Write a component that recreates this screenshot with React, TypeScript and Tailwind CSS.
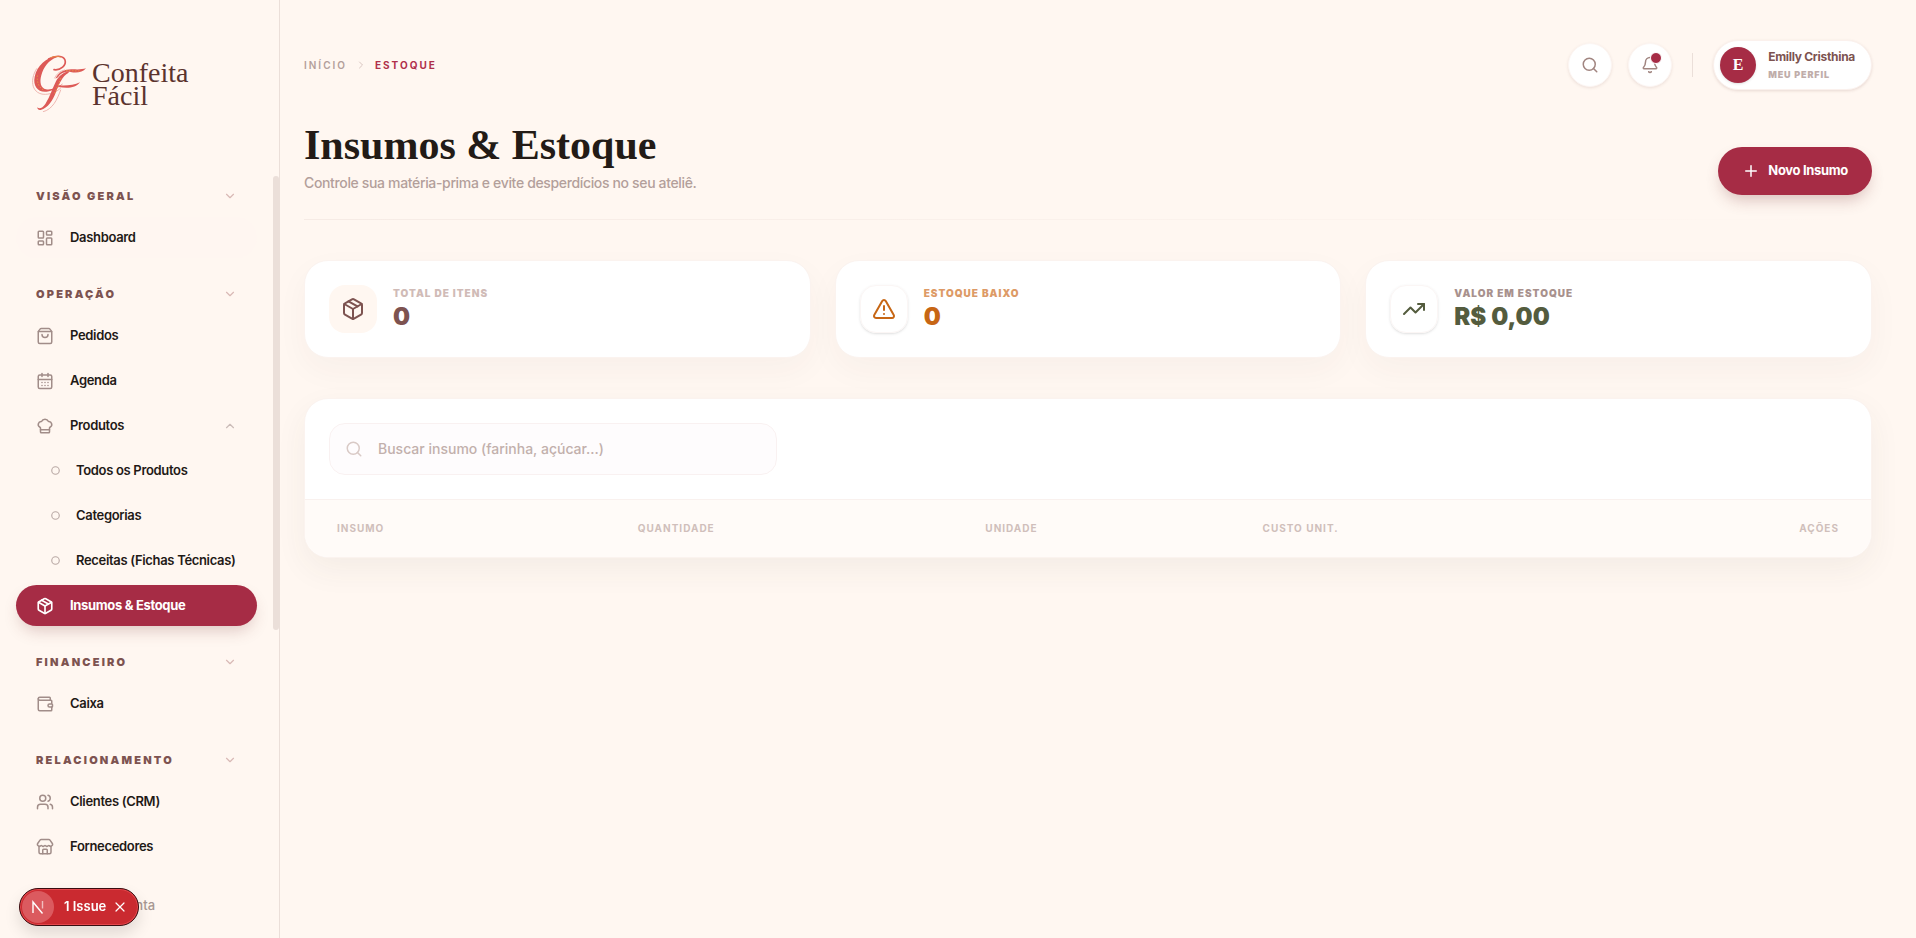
import type { ReactNode } from 'react';
import {
  Bell,
  CalendarDays,
  ChefHat,
  ChevronDown,
  ChevronRight,
  ChevronUp,
  Circle,
  LayoutDashboard,
  Package,
  Plus,
  Search,
  ShoppingBag,
  Store,
  TrendingUp,
  TriangleAlert,
  Users,
  Wallet,
  X,
} from 'lucide-react';
import type { LucideIcon } from 'lucide-react';

interface NavItemProps {
  icon: LucideIcon;
  label: string;
  active?: boolean;
  hovered?: boolean;
}

const NavItem = ({ icon: Icon, label, active, hovered }: NavItemProps) => {
  let style = 'text-[#1f1a17] font-semibold';
  if (active) style = 'bg-[#a62c45] text-white font-bold shadow-[0_8px_16px_-4px_rgba(120,50,50,0.25)]';
  if (hovered) style = 'text-[#1f1a17] font-semibold bg-[#fff6f1]';
  return (
    <li>
      <a href="#" className={`flex h-[41px] items-center gap-4 rounded-full px-5 text-[13px] tracking-tight ${style}`}>
        <Icon size={18} strokeWidth={active ? 2.2 : 2} className={active ? 'text-white' : 'text-[#a18d89]'} />
        {label}
      </a>
    </li>
  );
};

const SubItem = ({ label }: { label: string }) => (
  <li>
    <a href="#" className="flex h-[41px] items-center gap-4 pl-[35px] text-[13px] font-semibold tracking-tight whitespace-nowrap text-[#1f1a17]">
      <Circle size={9} strokeWidth={3} className="text-[#b9a9a5]" />
      {label}
    </a>
  </li>
);

const Section = ({ title, children }: { title: string; children: ReactNode }) => (
  <section>
    <button type="button" className="mb-[5px] flex h-8 w-full items-center justify-between px-5 text-[11px] font-black tracking-[0.2em] text-[#7d5350]">
      {title}
      <ChevronDown size={14} className="text-[#d9b9b5]" />
    </button>
    <ul className="flex flex-col gap-1">{children}</ul>
  </section>
);

const Logo = () => (
  <a href="#" className="flex items-center gap-1 text-[#5b332e]">
    <svg width="56" height="57" viewBox="18 21 168 171" fill="none" strokeLinecap="round" aria-hidden="true">
      {/* C */}
      <path d="M84 65 C104 68 122 52 117 36 C112 22 88 21 68 33" stroke="#dd5a57" strokeWidth="5" />
      <path d="M92 24 C62 28 32 54 26 86 C20 114 36 134 62 131 C82 129 100 118 112 106 C92 120 74 127 60 124 C44 121 40 102 46 82 C53 57 68 37 92 28Z" fill="#dd5a57" />
      <path d="M32 62 C8 100 20 140 58 139 C80 138 94 130 104 120" stroke="#eba9a3" strokeWidth="2.5" />
      {/* F */}
      <path d="M88 92 C98 70 120 62 142 64 C158 65 170 64 180 61 C170 74 150 76 134 72 C120 70 104 74 96 88Z" fill="#dd5a57" />
      <path d="M128 74 C108 84 100 108 90 132 C80 158 66 180 44 186 C38 187 34 184 34 178 C40 184 50 180 58 168 C72 146 80 120 90 100 C98 84 112 74 128 70Z" fill="#dd5a57" />
      <path d="M98 112 C118 114 144 112 162 103 C150 120 124 122 98 117Z" fill="#dd5a57" />
      <path d="M104 126 C94 154 80 184 52 191" stroke="#eba9a3" strokeWidth="2.5" />
      <path d="M116 66 C100 70 92 78 86 90" stroke="#eba9a3" strokeWidth="2.5" />
      <path d="M34 84 C32 104 40 122 56 127" stroke="#efa23c" strokeWidth="3" strokeDasharray="1 8" />
      <path d="M104 92 C98 108 92 122 86 136" stroke="#efa23c" strokeWidth="3" strokeDasharray="1 8" />
      <path d="M122 68 L164 69" stroke="#efa23c" strokeWidth="3" strokeDasharray="1 8" />
      <path d="M74 29 C84 25 96 24 104 28" stroke="#efa23c" strokeWidth="2" />
    </svg>
    <span className="font-['Liberation_Serif',serif] text-[28px] leading-[23px]">
      Confeita
      <br />
      Fácil
    </span>
  </a>
);

const Sidebar = () => (
  <aside className="relative flex h-screen w-[280px] shrink-0 flex-col overflow-hidden border-r border-[#ebdfd9]">
    <div className="h-44 shrink-0 px-8 pt-[55px]">
      <Logo />
    </div>
    <nav className="flex min-h-0 flex-1 flex-col gap-5 overflow-hidden pt-1 pr-[22px] pl-4">
      <Section title="VISÃO GERAL">
        <NavItem icon={LayoutDashboard} label="Dashboard" hovered />
      </Section>
      <Section title="OPERAÇÃO">
        <NavItem icon={ShoppingBag} label="Pedidos" />
        <NavItem icon={CalendarDays} label="Agenda" />
        <li>
          <button type="button" className="flex h-[41px] w-full items-center gap-4 px-5 text-[13px] font-semibold tracking-tight text-[#1f1a17]">
            <ChefHat size={18} strokeWidth={2} className="text-[#a18d89]" />
            Produtos
            <ChevronUp size={14} className="ml-auto text-[#cbbcb8]" />
          </button>
          <ul className="mt-1 flex flex-col gap-1">
            <SubItem label="Todos os Produtos" />
            <SubItem label="Categorias" />
            <SubItem label="Receitas (Fichas Técnicas)" />
          </ul>
        </li>
        <NavItem icon={Package} label="Insumos & Estoque" active />
      </Section>
      <Section title="FINANCEIRO">
        <NavItem icon={Wallet} label="Caixa" />
      </Section>
      <Section title="RELACIONAMENTO">
        <NavItem icon={Users} label="Clientes (CRM)" />
        <NavItem icon={Store} label="Fornecedores" />
      </Section>
    </nav>
    <a href="#" className="mr-[22px] ml-4 flex h-16 shrink-0 items-center justify-center text-[13px] font-medium text-[#a89792]">
      Conta
    </a>
    {/* scroll thumb */}
    <div className="absolute top-44 right-0 h-[454px] w-1.5 rounded-full bg-[#ebdfd9]" />
  </aside>
);

const IssueBadge = () => (
  <div className="fixed bottom-3 left-[19px] flex h-[38px] items-center rounded-full border border-[#3a0d10] bg-[#ca2a30] pr-[10px] pl-0.5 text-white shadow-[0_8px_16px_rgba(0,0,0,0.12)] ring-1 ring-[#e5484d] ring-inset">
    <span className="mr-[10px] flex size-8 items-center justify-center rounded-full bg-[#db5a5f]">
      <svg width="14" height="14" viewBox="0 0 14 14" fill="none" stroke="#fff" strokeWidth="1.4">
        <path d="M2 13V2L11.5 13.5" />
        <path d="M11.5 1V8.5" strokeOpacity="0.6" />
      </svg>
    </span>
    <button type="button" className="text-[13px] font-semibold">1 Issue</button>
    <button type="button" aria-label="Fechar" className="ml-1.5">
      <X size={16} strokeWidth={1.8} />
    </button>
  </div>
);

const TopBar = () => (
  <header className="flex h-[50px] items-center justify-between">
    <nav className="flex items-center gap-2 text-[10px] font-semibold tracking-[0.2em]">
      <a href="#" className="text-[#b39f9b]">INÍCIO</a>
      <ChevronRight size={12} className="text-[#d9c6c1]" />
      <span className="font-bold text-[#b0304b]">ESTOQUE</span>
    </nav>
    <div className="flex items-center">
      <button type="button" aria-label="Buscar" className="flex size-11 items-center justify-center rounded-full border border-[#fdf6f3] bg-white text-[#a18580] shadow-[0_1px_3px_rgba(125,83,80,0.14)]">
        <Search size={18} />
      </button>
      <button type="button" aria-label="Notificações" className="relative ml-4 flex size-11 items-center justify-center rounded-full border border-[#fdf6f3] bg-white text-[#a18580] shadow-[0_1px_3px_rgba(125,83,80,0.14)]">
        <Bell size={18} />
        <span className="absolute top-2 right-[9px] size-3 rounded-full border border-white bg-[#a62c45]" />
      </button>
      <div className="mx-5 h-6 w-px bg-[#ebdfd9]" />
      <button type="button" className="flex items-center gap-3 rounded-full border border-[#fbf1ed] bg-white py-1.5 pr-4 pl-1.5 text-left shadow-[0_1px_3px_rgba(125,83,80,0.18)]">
        <span className="flex size-9 items-center justify-center rounded-full bg-[#a62c45] font-['Liberation_Serif',serif] text-base font-bold text-white shadow-sm">E</span>
        <span className="flex flex-col gap-1">
          <span className="text-xs leading-4 font-bold tracking-tight text-[#7d5350]">Emilly Cristhina</span>
          <span className="text-[9px] leading-3 font-black tracking-widest text-[#c0adaa]">MEU PERFIL</span>
        </span>
      </button>
    </div>
  </header>
);

interface StatProps {
  icon: LucideIcon;
  label: string;
  value: string;
  box: string;
  labelColor: string;
  valueColor: string;
}

const stats: StatProps[] = [
  { icon: Package, label: 'TOTAL DE ITENS', value: '0', box: 'bg-[#fff7f1] text-[#7d5350]', labelColor: 'text-[#d0bbb7]', valueColor: 'text-[#7d5350]' },
  { icon: TriangleAlert, label: 'ESTOQUE BAIXO', value: '0', box: 'border border-[#fbf6f5] text-[#c76614] shadow-sm', labelColor: 'text-[#dd9a66]', valueColor: 'text-[#c76614]' },
  { icon: TrendingUp, label: 'VALOR EM ESTOQUE', value: 'R$ 0,00', box: 'border border-[#fbf6f5] text-[#545c3e] shadow-sm', labelColor: 'text-[#a8918d]', valueColor: 'text-[#545c3e]' },
];

const StatCard = ({ icon: Icon, label, value, box, labelColor, valueColor }: StatProps) => (
  <div className="flex items-center gap-4 rounded-3xl border border-[#fbf3ef] bg-white p-6 shadow-[0_12px_32px_rgba(70,60,50,0.04)]">
    <div className={`flex size-12 items-center justify-center rounded-2xl ${box}`}>
      <Icon size={24} strokeWidth={2} />
    </div>
    <div>
      <p className={`text-[10px] leading-4 font-black tracking-widest ${labelColor}`}>{label}</p>
      <p className={`text-2xl font-black ${valueColor}`}>{value}</p>
    </div>
  </div>
);

const StockTable = () => (
  <div className="overflow-hidden rounded-3xl border border-[#fbf3ef] bg-white shadow-[0_12px_32px_rgba(70,60,50,0.06)]">
    <div className="p-6">
      <label className="flex h-[52px] max-w-md items-center gap-[15px] rounded-2xl border border-[#f9f1f1] bg-[#fefcfd] px-[15px]">
        <Search size={18} strokeWidth={2} className="text-[#d9cac6]" />
        <input
          type="text"
          aria-label="Buscar insumo"
          placeholder="Buscar insumo (farinha, açúcar...)"
          className="flex-1 bg-transparent text-sm font-medium outline-none placeholder:text-[#c2b0ac]"
        />
      </label>
    </div>
    <table className="w-full table-fixed border-t border-[#f9f1ee] bg-[#fffbf8] text-left text-[10px] tracking-widest text-[#d0bfbb]">
      <thead>
        <tr className="h-[57px]">
          <th className="w-[19.2%] px-8 font-bold">INSUMO</th>
          <th className="w-[22.2%] px-8 font-bold">QUANTIDADE</th>
          <th className="w-[17.7%] px-8 font-bold">UNIDADE</th>
          <th className="px-8 font-bold">CUSTO UNIT.</th>
          <th className="px-8 text-right font-bold">AÇÕES</th>
        </tr>
      </thead>
    </table>
  </div>
);

const App = () => {
  return (
    <div className="flex min-h-screen bg-[#fff7f1] font-['Inter','Liberation_Sans',sans-serif]">
      <Sidebar />
      <main className="min-w-0 flex-1 pt-10 pr-11 pl-6">
        <TopBar />
        <div className="mt-[33px] flex items-end justify-between">
          <div>
            <h1 className="font-['Liberation_Serif',serif] text-[42px] leading-[44px] font-bold text-[#231b16]">Insumos &amp; Estoque</h1>
            <p className="mt-1 text-sm leading-6 font-medium tracking-tight text-[#b39f9b]">Controle sua matéria-prima e evite desperdícios no seu ateliê.</p>
          </div>
          <button type="button" className="flex h-12 items-center gap-2 rounded-full bg-[#a62c45] px-6 text-[13px] font-bold tracking-tight text-white shadow-[0_8px_16px_-4px_rgba(120,50,50,0.3)]">
            <Plus size={18} strokeWidth={2} />
            Novo Insumo
          </button>
        </div>
        <div className="mt-6 h-px bg-linear-to-r from-[#f6ebe5] to-transparent" />
        <div className="mt-10 grid grid-cols-3 gap-6">
          {stats.map((stat) => (
            <StatCard key={stat.label} {...stat} />
          ))}
        </div>
        <div className="mt-10">
          <StockTable />
        </div>
      </main>
      <IssueBadge />
    </div>
  );
};

export default App;
